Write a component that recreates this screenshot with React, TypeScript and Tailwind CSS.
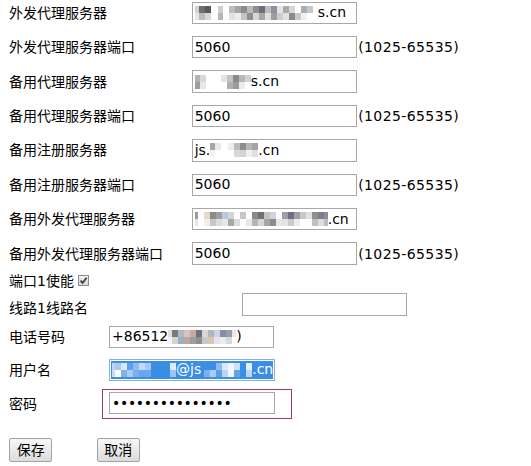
import React from "react";

type Block = [number, string, string];

// pixelated stand-in for the blurred parts of the screenshot
function Mosaic({ blocks }: { blocks: Block[] }) {
  return (
    <span className="inline-flex flex-row shrink-0 h-[14px] self-center">
      {blocks.map(([w, top, bottom], i) => (
        <span key={i} className="flex flex-col shrink-0" style={{ width: w }}>
          <span className="h-[7px]" style={{ background: top }} />
          <span className="h-[7px]" style={{ background: bottom }} />
        </span>
      ))}
    </span>
  );
}

const m1: Block[] = [
  [4, "#d0d0d0", "#e6e6e6"], [6, "#6e6e6e", "#bcbcbc"], [6, "#595959", "#d8d8d8"], [7, "#ffffff", "#ffffff"],
  [5, "#cfcfcf", "#b6b6b6"], [6, "#ffffff", "#ffffff"], [6, "#bdbdbd", "#e2e2e2"], [6, "#a5a5a5", "#ececec"],
  [6, "#8c8c8c", "#c4c4c4"], [6, "#bbbbbb", "#8e8e8e"], [6, "#8d8d97", "#d6d6d6"], [6, "#6e6e7a", "#a6a6a6"],
  [6, "#bcbcbc", "#e0e0e0"], [6, "#8f8f9f", "#9c9c9c"], [6, "#e4e4e4", "#cdcdcd"], [6, "#a9a9a9", "#e2e2e2"],
  [6, "#d6d6d6", "#8b8b8b"], [6, "#ffffff", "#c9c9c9"], [6, "#aeaeae", "#f0f0f0"], [6, "#c8c8c8", "#ffffff"],
  [5, "#ffffff", "#ffffff"],
];
const m3: Block[] = [
  [5, "#b2b2b2", "#9e9e9e"], [6, "#d8d8d8", "#e8e8e8"], [15, "#ffffff", "#ffffff"], [6, "#e4e4e4", "#ffffff"],
  [6, "#c4c4c4", "#b0b0b0"], [6, "#8a8a8a", "#9a9a9a"], [6, "#b8b8b8", "#ececec"], [6, "#d2d2d2", "#ffffff"],
];
const m5: Block[] = [
  [5, "#a8a8a8", "#f2f2f2"], [6, "#e8e8e8", "#ffffff"], [7, "#ffffff", "#ffffff"], [6, "#f0ece8", "#ffffff"],
  [6, "#bcbcbc", "#d8d8d8"], [6, "#8e8e8e", "#d4d4d4"], [6, "#b6b6b6", "#f0f0f0"], [6, "#a4a4a4", "#e0e0e0"],
];
const m7: Block[] = [
  [3, "#9a9a9a", "#e6e6e6"], [6, "#ffffff", "#ffffff"], [6, "#e6d8c8", "#f4eee8"], [6, "#8a8a8a", "#c8c8c8"],
  [6, "#9e9e9e", "#dcdcdc"], [6, "#b8c8e0", "#e8e8e8"], [6, "#d4d4d4", "#a8a8a8"], [6, "#ffffff", "#dcdcdc"],
  [6, "#c6c6c6", "#ffffff"], [6, "#ffffff", "#e8e8e8"], [6, "#8a8a8a", "#b4b4b4"], [6, "#707070", "#d6d6d6"],
  [6, "#c2c2c2", "#a6a6a6"], [6, "#d2d2d8", "#8c8c8c"], [6, "#ffffff", "#e6e6e6"], [6, "#9e9eaa", "#e2e2e2"],
  [6, "#6e6e7e", "#cacaca"], [6, "#a0a0a0", "#ececec"], [6, "#c8c8c8", "#ffffff"], [6, "#e0e0e0", "#ffffff"],
  [6, "#909090", "#c0c0c0"], [6, "#7e7e8c", "#dcdcdc"], [4, "#8c8c98", "#bcbcc4"],
];
const mPhone: Block[] = [
  [4, "#e0e0e0", "#f4f4f4"], [6, "#7a7a7a", "#d4d4d4"], [6, "#b0b8c0", "#9cb0c4"], [6, "#d8c4bc", "#bfa6a0"],
  [6, "#c8a8a0", "#9e9e9e"], [6, "#70707a", "#8e8e98"], [6, "#d8d8d8", "#c8c8c8"], [6, "#b4b4bc", "#d8c8b0"],
  [6, "#c8d4ec", "#e4e4ec"], [6, "#8a8aa4", "#ececf0"], [6, "#9a9ab0", "#d8d8e0"], [4, "#e8e8ec", "#ffffff"],
];
const mUser1: Block[] = [
  [3, "#bcd6f4", "#c8dcf4"], [6, "#a8c8f0", "#ffffff"], [6, "#dce8f8", "#7fb2ec"], [6, "#5ea0ec", "#a8cbf4"],
  [6, "#8cbcf2", "#7ab0ee"], [6, "#c0daf8", "#68a6ee"], [6, "#a6c8f4", "#6aa8ee"], [6, "#3a8ee6", "#3a8ee6"],
  [6, "#3a8ee6", "#3a8ee6"], [7, "#3a8ee6", "#3a8ee6"], [6, "#dceafa", "#9cc4f2"],
];
const mUser2: Block[] = [
  [3, "#3a8ee6", "#3a8ee6"], [6, "#3a8ee6", "#7ab2f0"], [6, "#3a8ee6", "#a8ccf4"], [6, "#8cbcf2", "#5a9eec"],
  [6, "#dce8fa", "#b8d4f6"], [6, "#f0f6fe", "#f4f8fe"], [6, "#cce0f8", "#5ea2ec"], [6, "#3a8ee6", "#3a8ee6"],
  [6, "#e4eefb", "#bcd6f6"],
];

function Field({ children, wide = true, border = "border-[#a7a7a7]" }: { children?: React.ReactNode; wide?: boolean; border?: string }) {
  return (
    <div className={`flex flex-row items-center h-[22.5px] border ${border} bg-white pl-[2px] overflow-hidden whitespace-nowrap ${wide ? "w-[165px]" : "w-[166px]"}`}>
      {children}
    </div>
  );
}

const serverRows: { label: string; value: React.ReactNode; port?: boolean }[] = [
  { label: "外发代理服务器", value: <><Mosaic blocks={m1} /><span>s.cn</span></> },
  { label: "外发代理服务器端口", value: "5060", port: true },
  { label: "备用代理服务器", value: <><Mosaic blocks={m3} /><span>s.cn</span></> },
  { label: "备用代理服务器端口", value: "5060", port: true },
  { label: "备用注册服务器", value: <><span>js.</span><Mosaic blocks={m5} /><span>.cn</span></> },
  { label: "备用注册服务器端口", value: "5060", port: true },
  { label: "备用外发代理服务器", value: <><Mosaic blocks={m7} /><span>.cn</span></> },
  { label: "备用外发代理服务器端口", value: "5060", port: true },
];

export default function App() {
  return (
    <div className="w-[531px] h-[466px] overflow-hidden bg-white text-[14px] text-black font-['DejaVu_Sans','Noto_Sans_CJK_SC',sans-serif] pl-[9px] pt-[1.6px]">
      <div className="flex flex-col gap-[11.9px]">
        {serverRows.map((r) => (
          <div key={r.label} className="flex flex-row items-center h-[22.5px]">
            <div className="w-[182.7px] leading-[16px]">{r.label}</div>
            <Field>{r.value}</Field>
            {r.port && <span className="ml-[1.5px] leading-[16px] tracking-[0.4px]">(1025-65535)</span>}
          </div>
        ))}
      </div>

      <div className="flex flex-row items-center h-[16px] mt-[7.8px]">
        <span className="leading-[16px]">端口1使能</span>
        <span className="ml-[4.5px] w-[11px] h-[11px] border border-[#8c8c8c] bg-gradient-to-b from-[#f0f0f0] to-[#d8d8d8] flex items-center justify-center">
          <svg width="9" height="9" viewBox="0 0 9 9">
            <path d="M1.5 4.6 L3.6 6.8 L7.6 1.8" fill="none" stroke="#3c3c3c" strokeWidth="1.8" />
          </svg>
        </span>
      </div>

      <div className="flex flex-row items-end mt-[4.4px]">
        <div className="w-[232.7px] leading-[16px]">线路1线路名</div>
        <Field />
      </div>

      <div className="flex flex-row items-center mt-[10px]">
        <div className="w-[93px] leading-[16px]">电话号码</div>
        <div className="pl-[7px]">
          <Field>
            <span>+86512</span>
            <Mosaic blocks={mPhone} />
            <span>)</span>
          </Field>
        </div>
      </div>

      <div className="flex flex-row items-center mt-[10.6px]">
        <div className="w-[93px] leading-[16px]">用户名</div>
        <div className="pl-[7px]">
          <div className="flex flex-row h-[22.7px] w-[166px] border border-[#86b0dc] bg-white p-[1px] overflow-hidden whitespace-nowrap">
            <div className="flex flex-row items-center flex-1 bg-[#3a8ee6] text-white pl-[1px]">
              <Mosaic blocks={mUser1} />
              <span>@js</span>
              <Mosaic blocks={mUser2} />
              <span>.cn</span>
            </div>
          </div>
        </div>
      </div>

      <div className="flex flex-row items-center mt-[8px]">
        <div className="w-[93px] leading-[16px]">密码</div>
        <div className="border border-[#9a3f4c] pl-[6px] pr-[16px] pt-[1.7px] pb-[4px]">
          <Field wide={false}>
            <span className="tracking-[-0.3px] text-black">•••••••••••••••</span>
          </Field>
        </div>
      </div>

      <div className="flex flex-row mt-[18.3px] gap-[44.4px]">
        <button className="w-[43.3px] h-[24.4px] border border-[#a3a3a3] rounded-[2px] bg-gradient-to-b from-[#f7f7f7] to-[#dcdcdc] leading-[16px] text-[14px] text-black">保存</button>
        <button className="w-[43.3px] h-[24.4px] border border-[#a3a3a3] rounded-[2px] bg-gradient-to-b from-[#f7f7f7] to-[#dcdcdc] leading-[16px] text-[14px] text-black">取消</button>
      </div>
    </div>
  );
}
